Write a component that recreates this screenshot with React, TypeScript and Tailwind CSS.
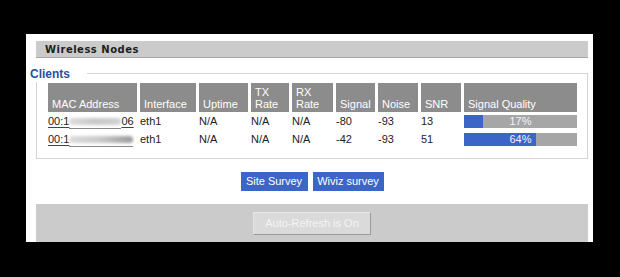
import React from "react";

const cols = "grid-cols-[89px_56px_49px_38px_41px_39px_40px_40px_113px]";

function Head({ children }: { children: React.ReactNode }) {
  return (
    <div className="flex h-[29px] items-end bg-[#8c8c8c] pb-[2px] pl-[4px] text-[11px] leading-[12px] text-white">
      <div>{children}</div>
    </div>
  );
}

function Bar({ pct }: { pct: number }) {
  return (
    <div className="relative h-[13px] w-[113px] bg-[#a6a6a6]">
      <div className="absolute left-0 top-0 h-full bg-[#3b66c8]" style={{ width: `${pct}%` }} />
      <div className="absolute inset-0 flex items-center justify-center text-[11px] leading-none text-[#f2f4fa]">{pct}%</div>
    </div>
  );
}

function Row({ end, signal, noise, snr, pct }: { end: string; signal: string; noise: string; snr: string; pct: number }) {
  return (
    <>
      <div className="flex h-[18px] items-center">
        <span className="flex items-center whitespace-nowrap">
          <span className="underline decoration-[#444] underline-offset-2">00:1</span>
          <span className={`relative inline-block h-[13px] ${end ? "w-[52px]" : "w-[64px]"}`}>
            <span
              className={`absolute left-0 right-0 top-[3px] h-[7px] rounded-full bg-gradient-to-r from-[#dcdcdc] via-[#c8c8c8] ${end ? "to-[#d0d0d0]" : "to-[#9a9a9a]"} blur-[1.5px]`}
            />
            <span className="absolute bottom-[-1px] left-0 right-0 h-px bg-[#888]" />
          </span>
          {end ? <span className="underline decoration-[#444] underline-offset-2">{end}</span> : null}
        </span>
      </div>
      <div className="flex h-[18px] items-center">eth1</div>
      <div className="flex h-[18px] items-center">N/A</div>
      <div className="flex h-[18px] items-center">N/A</div>
      <div className="flex h-[18px] items-center">N/A</div>
      <div className="flex h-[18px] items-center">{signal}</div>
      <div className="flex h-[18px] items-center">{noise}</div>
      <div className="flex h-[18px] items-center">{snr}</div>
      <div className="flex h-[18px] items-center">
        <Bar pct={pct} />
      </div>
    </>
  );
}

export default function App() {
  return (
    <div className="h-[277px] w-[620px] bg-black pl-[26px] pt-[34px]" style={{ fontFamily: "'Liberation Sans', Arial, sans-serif" }}>
      <div className="flex h-[208px] w-[567px] flex-col bg-white pl-[10px] pr-[5px] pt-[7px]">
        <div className="flex h-[17px] items-center border-b border-[#a9a9a9] bg-[#cbcbcb] pl-[9px]">
          <span className="text-[10px] font-bold tracking-[0.5px] text-[#1e1e1e]" style={{ fontFamily: "'DejaVu Sans', Verdana, sans-serif" }}>
            Wireless Nodes
          </span>
        </div>
        <div className="relative mt-[15px] h-[86px] border border-[#d4d4d4] pl-[11px] pt-[9px]">
          <div className="absolute left-[-7px] top-[-7px] bg-white pr-[17px] text-[12px] font-bold leading-[15px] text-[#2c4f9e]">
            Clients
          </div>
          <div className={`grid ${cols} gap-x-[3px] text-[11px] text-[#222]`}>
            <Head>MAC Address</Head>
            <Head>Interface</Head>
            <Head>Uptime</Head>
            <Head>
              TX
              <br />
              Rate
            </Head>
            <Head>
              RX
              <br />
              Rate
            </Head>
            <Head>Signal</Head>
            <Head>Noise</Head>
            <Head>SNR</Head>
            <Head>Signal Quality</Head>
            <Row end="06" signal="-80" noise="-93" snr="13" pct={17} />
            <Row end="" signal="-42" noise="-93" snr="51" pct={64} />
          </div>
        </div>
        <div className="mt-[13px] flex justify-center gap-[5px]">
          <button className="h-[19px] w-[67px] bg-[#3b66c8] text-[11px] text-white">Site Survey</button>
          <button className="h-[19px] w-[71px] bg-[#3b66c8] text-[11px] text-white">Wiviz survey</button>
        </div>
        <div className="mt-[13px] flex flex-1 justify-center bg-[#cbcbcb] pt-[8px]">
          <div className="flex h-[23px] w-[118px] items-center justify-center border border-[#e6e6e6] border-b-[#9c9c9c] border-r-[#9c9c9c] bg-[#dadada] text-[11px] text-[#f4f4f4]">
            Auto-Refresh is On
          </div>
        </div>
      </div>
    </div>
  );
}
